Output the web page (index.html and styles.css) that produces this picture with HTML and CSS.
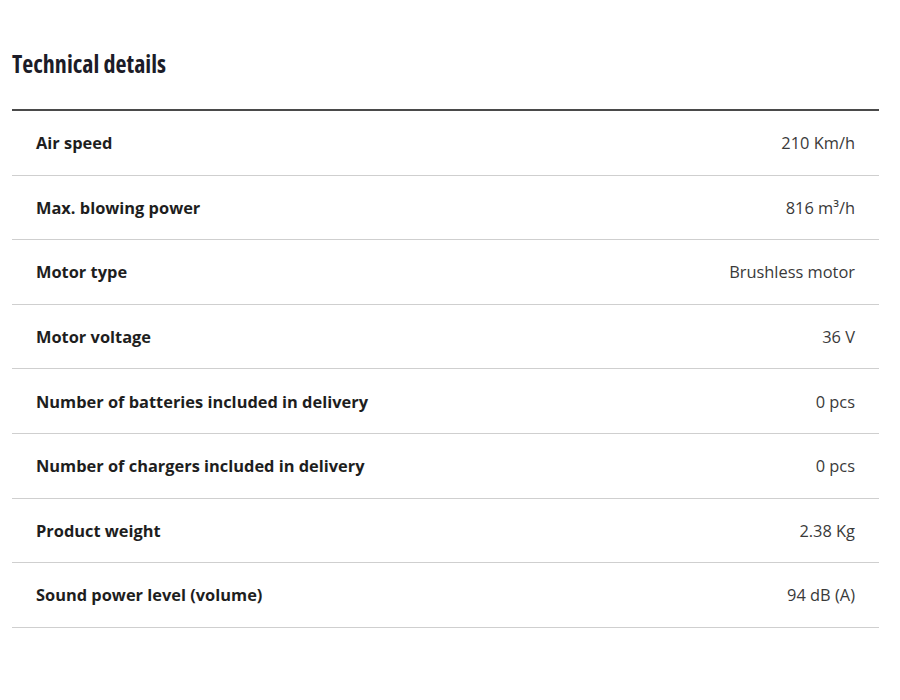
FILE: index.html
```html
<!DOCTYPE html>
<html>
<head>
<meta charset="utf-8">
<link rel="stylesheet" href="styles.css">
</head>
<body>
<section class="specs">
  <h2 class="specs-title">Technical details</h2>
  <div class="specs-table">
    <div class="row"><span class="label">Air speed</span><span class="value">210 Km/h</span></div>
    <div class="row"><span class="label">Max. blowing power</span><span class="value">816 m³/h</span></div>
    <div class="row"><span class="label">Motor type</span><span class="value">Brushless motor</span></div>
    <div class="row"><span class="label">Motor voltage</span><span class="value">36 V</span></div>
    <div class="row"><span class="label">Number of batteries included in delivery</span><span class="value">0 pcs</span></div>
    <div class="row"><span class="label">Number of chargers included in delivery</span><span class="value">0 pcs</span></div>
    <div class="row"><span class="label">Product weight</span><span class="value">2.38 Kg</span></div>
    <div class="row"><span class="label">Sound power level (volume)</span><span class="value">94 dB (A)</span></div>
  </div>
</section>
</body>
</html>
```
FILE: styles.css
```css
html, body {
  margin: 0;
  padding: 0;
  background: #ffffff;
}
body {
  font-family: "Open Sans", "Noto Sans", sans-serif;
  color: #222;
}
.specs {
  width: 867px;
  padding: 0 0 0 12px;
}
.specs-title {
  margin: 0;
  padding-top: 49px;
  height: 109px;
  box-sizing: border-box;
  font-size: 24px;
  line-height: 30px;
  font-weight: 700;
  font-stretch: 75%;
  color: #1c1c28;
}
.specs-table {
  border-top: 2px solid #4a4a4a;
}
.row {
  display: flex;
  justify-content: space-between;
  align-items: center;
  height: 63.6px;
  padding: 0 24px;
  border-bottom: 1px solid #cfcfcf;
}
.label {
  font-size: 16.4px;
  font-weight: 700;
  color: #1e1e1e;
}
.value {
  font-size: 16.4px;
  font-weight: 400;
  color: #3a3a3a;
}
```
